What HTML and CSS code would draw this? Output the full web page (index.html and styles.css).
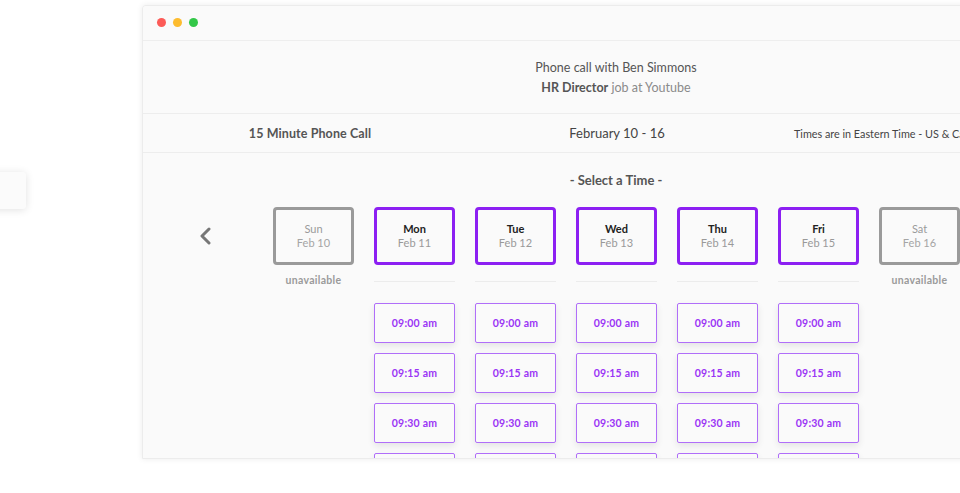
FILE: index.html
```html
<!DOCTYPE html>
<html lang="en">
<head>
<meta charset="utf-8">
<title>Select a Time</title>
<link rel="stylesheet" href="styles.css">
</head>
<body>
<div class="stage">
  <div class="side-card"></div>
  <div class="window">
    <div class="titlebar">
      <span class="dot red"></span>
      <span class="dot yellow"></span>
      <span class="dot green"></span>
    </div>
    <div class="header">
      <div class="h-line">Phone call with Ben Simmons</div>
      <div class="h-line"><b>HR Director</b> <span class="muted">job at Youtube</span></div>
    </div>
    <div class="infobar">
      <div class="info-title">15 Minute Phone Call</div>
      <div class="info-range">February 10 - 16</div>
      <div class="info-tz">Times are in Eastern Time - US &amp; Canada</div>
    </div>
    <div class="picker">
      <div class="picker-title">- Select a Time -</div>
      <div class="days-row">
        <div class="chev">
          <svg width="14" height="18" viewBox="0 0 14 18"><path d="M11 2 L4 9 L11 16" fill="none" stroke="#777" stroke-width="3" stroke-linecap="round" stroke-linejoin="round"/></svg>
        </div>
        <div class="days">
          <div class="day-col">
            <div class="day off"><div class="dname">Sun</div><div class="ddate">Feb 10</div></div>
            <div class="unavail">unavailable</div>
          </div>
          <div class="day-col">
            <div class="day on"><div class="dname">Mon</div><div class="ddate">Feb 11</div></div>
            <div class="divider"></div>
            <div class="slot">09:00 am</div>
            <div class="slot">09:15 am</div>
            <div class="slot">09:30 am</div>
            <div class="slot">09:45 am</div>
          </div>
          <div class="day-col">
            <div class="day on"><div class="dname">Tue</div><div class="ddate">Feb 12</div></div>
            <div class="divider"></div>
            <div class="slot">09:00 am</div>
            <div class="slot">09:15 am</div>
            <div class="slot">09:30 am</div>
            <div class="slot">09:45 am</div>
          </div>
          <div class="day-col">
            <div class="day on"><div class="dname">Wed</div><div class="ddate">Feb 13</div></div>
            <div class="divider"></div>
            <div class="slot">09:00 am</div>
            <div class="slot">09:15 am</div>
            <div class="slot">09:30 am</div>
            <div class="slot">09:45 am</div>
          </div>
          <div class="day-col">
            <div class="day on"><div class="dname">Thu</div><div class="ddate">Feb 14</div></div>
            <div class="divider"></div>
            <div class="slot">09:00 am</div>
            <div class="slot">09:15 am</div>
            <div class="slot">09:30 am</div>
            <div class="slot">09:45 am</div>
          </div>
          <div class="day-col">
            <div class="day on"><div class="dname">Fri</div><div class="ddate">Feb 15</div></div>
            <div class="divider"></div>
            <div class="slot">09:00 am</div>
            <div class="slot">09:15 am</div>
            <div class="slot">09:30 am</div>
            <div class="slot">09:45 am</div>
          </div>
          <div class="day-col">
            <div class="day off"><div class="dname">Sat</div><div class="ddate">Feb 16</div></div>
            <div class="unavail">unavailable</div>
          </div>
        </div>
      </div>
    </div>
  </div>
</div>
</body>
</html>
```

FILE: styles.css
```css
* { box-sizing: border-box; }
html, body {
  margin: 0;
  padding: 0;
  background: #ffffff;
  width: 960px;
  height: 493px;
  overflow: hidden;
  font-family: Lato, "Noto Sans", sans-serif;
}
.stage {
  display: flex;
  align-items: flex-start;
  width: 960px;
  height: 493px;
  overflow: hidden;
}
.side-card {
  flex: none;
  width: 120px;
  height: 37px;
  margin-left: -94px;
  margin-top: 172px;
  background: #fbfbfb;
  border-radius: 3px;
  box-shadow: 0 1px 8px rgba(0, 0, 0, 0.12);
}
.window {
  flex: none;
  width: 948px;
  height: 454px;
  margin-top: 5px;
  margin-left: 116px;
  background: #fafafa;
  border: 1px solid #ececec;
  border-radius: 4px 4px 0 0;
  box-shadow: 0 0 6px rgba(0, 0, 0, 0.08);
  overflow: hidden;
  display: flex;
  flex-direction: column;
}
.titlebar {
  flex: none;
  height: 35px;
  border-bottom: 1px solid #eeeeee;
  display: flex;
  align-items: center;
  gap: 7px;
  padding-left: 14px;
  padding-bottom: 1px;
  background: #fafafa;
}
.dot {
  width: 9px;
  height: 9px;
  border-radius: 50%;
  display: block;
}
.red { background: #fc5b57; }
.yellow { background: #fdbc2f; }
.green { background: #33c748; }
.header {
  flex: none;
  height: 73px;
  border-bottom: 1px solid #ededed;
  display: flex;
  flex-direction: column;
  align-items: center;
  justify-content: center;
  padding-top: 1px;
  gap: 2px;
}
.h-line {
  font-size: 12.5px;
  line-height: 18px;
  color: #555555;
}
.h-line b { font-weight: 700; color: #555; }
.muted { color: #8a8a8a; }
.infobar {
  flex: none;
  height: 39px;
  border-bottom: 1px solid #ededed;
  display: grid;
  grid-template-columns: 334px 280px 1fr;
  align-items: center;
}
.info-title {
  text-align: center;
  font-size: 12.5px;
  font-weight: 700;
  color: #555;
  letter-spacing: 0.1px;
}
.info-range {
  text-align: center;
  font-size: 13px;
  color: #444;
}
.info-tz {
  padding-left: 37px;
  font-size: 10.8px;
  color: #444;
  white-space: nowrap;
}
.picker {
  flex: 1;
  display: flex;
  flex-direction: column;
}
.picker-title {
  margin-top: 18px;
  text-align: center;
  font-size: 13px;
  line-height: 18px;
  font-weight: 700;
  color: #555;
}
.days-row {
  margin-top: 18px;
  display: flex;
  align-items: flex-start;
  padding-left: 55px;
}
.chev {
  flex: none;
  width: 14px;
  margin-top: 20px;
  margin-right: 61px;
  display: flex;
}
.days {
  display: flex;
  gap: 20px;
}
.day-col {
  width: 81px;
  display: flex;
  flex-direction: column;
  align-items: stretch;
}
.day {
  height: 58px;
  border: 3px solid;
  border-radius: 4px;
  display: flex;
  flex-direction: column;
  align-items: center;
  justify-content: center;
  font-size: 11px;
  line-height: 14px;
}
.day.on { border-color: #8c1ff2; }
.day.off { border-color: #9a9a9a; }
.dname { font-weight: 700; color: #222; }
.ddate { color: #999; }
.day.off .dname { color: #9a9a9a; font-weight: 400; }
.day.off .ddate { color: #a5a5a5; }
.unavail {
  margin-top: 9px;
  text-align: center;
  font-size: 10.5px;
  font-weight: 700;
  letter-spacing: 0.3px;
  color: #9a9a9a;
}
.divider {
  margin-top: 16px;
  height: 1px;
  background: #ececec;
}
.slot {
  margin-top: 21px;
  height: 40px;
  border: 1.5px solid #b06ef9;
  border-radius: 2px;
  background: #fafafa;
  box-shadow: 0 3px 7px rgba(0, 0, 0, 0.09);
  display: flex;
  align-items: center;
  justify-content: center;
  padding-bottom: 1px;
  font-size: 10.5px;
  font-weight: 700;
  color: #9a35f5;
  letter-spacing: 0.2px;
}
.slot + .slot { margin-top: 10px; }
```
